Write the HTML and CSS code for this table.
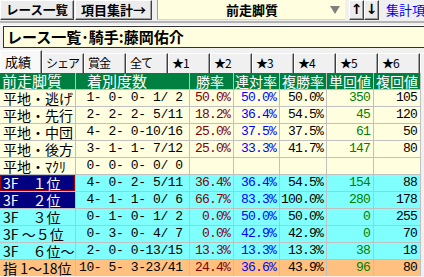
FILE: index.html
```html
<!DOCTYPE html>
<html lang="ja">
<head>
<meta charset="utf-8">
<link rel="stylesheet" href="styles.css">
</head>
<body>
<div class="toolbar">
  <div class="btn btn-list">レース一覧</div>
  <div class="btn btn-sum">項目集計→</div>
  <div class="combo"><span class="combo-text">前走脚質</span><span class="combo-arrow"></span></div>
  <div class="btn btn-arrow">↑</div>
  <div class="btn btn-arrow">↓</div>
  <span class="link">集計項目</span>
</div>
<div class="sep"></div>
<div class="title">レース一覧･騎手:藤岡佑介</div>
<div class="tabs">
  <div class="tab tab-active">成績</div>
  <div class="tab">シェア</div>
  <div class="tab">賞金</div>
  <div class="tab">全て</div>
  <div class="tab">★1</div>
  <div class="tab">★2</div>
  <div class="tab">★3</div>
  <div class="tab">★4</div>
  <div class="tab">★5</div>
  <div class="tab">★6</div>
  <div class="tab tab-cut"></div>
</div>
<div class="grid">
  <div class="h h-big">前走脚質</div><div class="h h-big h-rec">着別度数</div><div class="h h-win">勝率</div><div class="h h-r2">連対率</div><div class="h">複勝率</div><div class="h">単回値</div><div class="h">複回値</div>

  <div class="c lbl">平地・逃げ</div><div class="c num rec"> 1- 0- 0- 1/ 2</div><div class="c num win">50.0%</div><div class="c num ren">50.0%</div><div class="c num">50.0%</div><div class="c num tan">350</div><div class="c num">105</div>
  <div class="c lbl">平地・先行</div><div class="c num rec"> 2- 2- 2- 5/11</div><div class="c num win">18.2%</div><div class="c num ren">36.4%</div><div class="c num">54.5%</div><div class="c num tan">45</div><div class="c num">120</div>
  <div class="c lbl">平地・中団</div><div class="c num rec"> 4- 2- 0-10/16</div><div class="c num win">25.0%</div><div class="c num ren">37.5%</div><div class="c num">37.5%</div><div class="c num tan">61</div><div class="c num">50</div>
  <div class="c lbl">平地・後方</div><div class="c num rec"> 3- 1- 1- 7/12</div><div class="c num win">25.0%</div><div class="c num ren">33.3%</div><div class="c num">41.7%</div><div class="c num tan">147</div><div class="c num">80</div>
  <div class="c lbl">平地・ﾏｸﾘ</div><div class="c num rec"> 0- 0- 0- 0/ 0</div><div class="c num"></div><div class="c num"></div><div class="c num"></div><div class="c num"></div><div class="c num"></div>

  <div class="c lbl cy sel focus">3F　１位</div><div class="c num rec cy"> 4- 0- 2- 5/11</div><div class="c num win cy">36.4%</div><div class="c num ren cy">36.4%</div><div class="c num cy">54.5%</div><div class="c num tan cy">154</div><div class="c num cy">88</div>
  <div class="c lbl cy sel">3F　２位</div><div class="c num rec cy"> 4- 1- 1- 0/ 6</div><div class="c num win cy">66.7%</div><div class="c num ren cy">83.3%</div><div class="c num cy">100.0%</div><div class="c num tan cy">280</div><div class="c num cy">178</div>
  <div class="c lbl cy">3F　３位</div><div class="c num rec cy"> 0- 1- 0- 1/ 2</div><div class="c num win cy">0.0%</div><div class="c num ren cy">50.0%</div><div class="c num cy">50.0%</div><div class="c num tan cy">0</div><div class="c num cy">255</div>
  <div class="c lbl cy">3F ～５位</div><div class="c num rec cy"> 0- 3- 0- 4/ 7</div><div class="c num win cy">0.0%</div><div class="c num ren cy">42.9%</div><div class="c num cy">42.9%</div><div class="c num tan cy">0</div><div class="c num cy">70</div>
  <div class="c lbl cy">3F　６位～</div><div class="c num rec cy"> 2- 0- 0-13/15</div><div class="c num win cy">13.3%</div><div class="c num ren cy">13.3%</div><div class="c num cy">13.3%</div><div class="c num tan cy">38</div><div class="c num cy">18</div>
  <div class="c lbl or">指 1～18位</div><div class="c num rec or">10- 5- 3-23/41</div><div class="c num win or">24.4%</div><div class="c num ren or">36.6%</div><div class="c num or">43.9%</div><div class="c num tan or">96</div><div class="c num or">80</div>
</div>
</body>
</html>
```
FILE: styles.css
```css
* { box-sizing: border-box; }
html, body { margin: 0; padding: 0; }
body {
  width: 424px;
  height: 277px;
  overflow: hidden;
  background: #f0f0f0;
  font-family: "Noto Sans CJK JP", "Noto Sans", sans-serif;
  color: #000;
}

/* toolbar */
.toolbar {
  display: flex;
  align-items: flex-start;
  height: 21px;
  overflow: hidden;
}
.toolbar > * { flex-shrink: 0; }
.btn {
  height: 20px;
  background: #ececec;
  border: 1px solid;
  border-color: #ffffff #404040 #404040 #ffffff;
  box-shadow: inset -1px -1px 0 #a0a0a0;
  font-size: 12.5px;
  font-weight: bold;
  line-height: 17px;
  text-align: center;
  white-space: nowrap;
}
.btn-list { width: 74px; }
.btn-sum { width: 77px; margin-left: 1px; font-size: 13px; }
.btn-arrow {
  width: 15px;
  font-size: 14px;
  padding: 0;
  font-family: "DejaVu Sans", sans-serif;
}
.combo {
  width: 188px;
  height: 20px;
  margin-left: 5px;
  margin-right: 4px;
  background: #ffffe0;
  border-left: 1px solid #a0a0a0;
  border-bottom: 1px solid #d8d8c0;
  display: flex;
  align-items: center;
  padding-left: 16px;
}
.combo-text {
  flex: 1;
  text-align: center;
  font-size: 13px;
  font-weight: bold;
}
.combo-arrow {
  width: 0;
  height: 0;
  margin-right: 5px;
  border-left: 5px solid transparent;
  border-right: 5px solid transparent;
  border-top: 8px solid #808080;
}
.link {
  margin-left: 7px;
  color: #0000ff;
  font-size: 13px;
  line-height: 20px;
  white-space: nowrap;
}

.sep {
  height: 5px;
  border-top: 2px solid #b4b4b4;
  border-bottom: 1px solid #ffffff;
}

/* title */
.title {
  margin-left: 3px;
  height: 22px;
  background: #ffffe0;
  border: 1px solid #303030;
  border-right: none;
  padding-left: 3px;
  font-size: 15px;
  font-weight: bold;
  line-height: 20px;
  white-space: nowrap;
}

/* tabs */
.tabs {
  display: flex;
  align-items: flex-end;
  height: 25px;
  padding-top: 2px;
  overflow: hidden;
}
.tab {
  flex-shrink: 0;
  width: 42px;
  height: 20px;
  background: #f0f0f0;
  border-top: 1px solid #ffffff;
  border-left: 1px solid #ffffff;
  border-right: 1px solid #404040;
  box-shadow: inset -1px 0 0 #a0a0a0;
  padding-left: 3px;
  font-size: 12px;
  letter-spacing: -1px;
  line-height: 18px;
  white-space: nowrap;
  overflow: hidden;
}
.tab-active {
  height: 23px;
  background: #f8f8f8;
  font-size: 13px;
  letter-spacing: 0;
  line-height: 21px;
  padding-left: 4px;
}
.tab-cut { width: 6px; }

/* grid */
.grid {
  display: grid;
  grid-template-columns: 75px 113px 43px 45px 46px 46px 46px;
  grid-auto-rows: 16px;
  gap: 1px;
  width: 421px;
  padding-right: 1px;
  background: #c0c0c0;
}
.h {
  background: #008040;
  color: #ffffff;
  font-size: 14px;
  line-height: 16px;
  padding-left: 2px;
  white-space: nowrap;
  overflow: hidden;
}
.h-big { font-size: 15px; }
.h-rec { padding-left: 11px; }
.h-win { padding-left: 6px; }
.h-r2 { padding-left: 1px; }

.c {
  background: #ffffe0;
  line-height: 16px;
  white-space: pre;
  overflow: hidden;
}
.lbl {
  font-size: 14px;
  padding-left: 3px;
}
.num {
  font-family: "Liberation Mono", monospace;
  font-size: 13px;
  letter-spacing: -0.8px;
  text-align: right;
  padding-right: 3px;
}
.rec {
  text-align: left;
  padding-left: 3px;
  padding-right: 0;
  letter-spacing: -0.4px;
}
.win { color: #800000; }
.ren { color: #0000ff; }
.tan { color: #008000; }
.cy { background: #80ffff; }
.or { background: #ffc080; }
.sel { background: #000080; color: #ffffff; }
.focus { box-shadow: inset 0 0 0 1px #a00000; }
```
